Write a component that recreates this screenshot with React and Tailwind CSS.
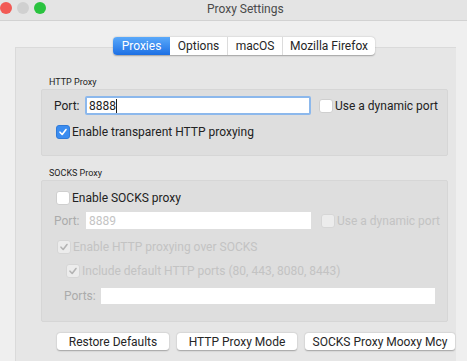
import React from 'react';

/**
 * Small mac-style checkbox
 */
function Check({ checked = false, disabled = false }) {
  const box = disabled
    ? 'bg-[#ececec] border border-[#d6d6d6]'
    : checked
      ? 'bg-[#3a8cf0] border border-[#2f7ad8]'
      : 'bg-white border border-[#cfcfcf]';
  return (
    <span className={`w-[14px] h-[14px] rounded-[3px] flex items-center justify-center flex-shrink-0 ${box}`}>
      {checked && (
        <svg width="10" height="10" viewBox="0 0 10 10" fill="none">
          <path
            d="M2 5.2 L4.2 7.5 L8 2.5"
            stroke={disabled ? '#b4b4b4' : '#ffffff'}
            strokeWidth="1.6"
            strokeLinecap="round"
            strokeLinejoin="round"
          />
        </svg>
      )}
    </span>
  );
}

function Button({ children, width }) {
  return (
    <div
      className={`h-[17px] ${width} bg-white rounded-[3px] shadow-[0_0.5px_1.5px_rgba(0,0,0,0.3)] flex items-center justify-center text-[12px] text-[#262626] whitespace-nowrap`}
    >
      {children}
    </div>
  );
}

export default function App() {
  return (
    <div
      className="w-[467px] h-[361px] bg-[#efefef] overflow-hidden flex flex-col"
      style={{ fontFamily: 'Roboto, "Liberation Sans", sans-serif' }}
    >
      {/* Title bar */}
      <div className="h-[21px] flex-shrink-0 bg-[#e4e4e4] border-b border-[#d2d2d2] flex items-center">
        <div className="flex gap-[5px] mt-[-5px]">
          <span className="w-[12px] h-[12px] rounded-full bg-[#f25a55]" />
          <span className="w-[12px] h-[12px] rounded-full bg-[#d0d0d0]" />
          <span className="w-[12px] h-[12px] rounded-full bg-[#2ac33f]" />
        </div>
        <div className="ml-[161px] mt-[-3px] text-[12px] text-[#4a4a4a]">Proxy Settings</div>
      </div>

      {/* Tabs */}
      <div className="mt-[16px] ml-[113px] flex h-[18px] relative z-10 -mb-[8px] w-fit rounded-[4px] bg-white shadow-[0_0.5px_1.5px_rgba(0,0,0,0.3)] text-[12px] text-[#262626]">
        <div className="w-[57px] flex items-center justify-center rounded-l-[4px] bg-gradient-to-b from-[#5aa9fa] to-[#1c6fe4] text-white">
          Proxies
        </div>
        <div className="w-[58px] flex items-center justify-center border-r border-[#dcdcdc]">Options</div>
        <div className="w-[55px] flex items-center justify-center border-r border-[#dcdcdc]">macOS</div>
        <div className="w-[92px] flex items-center justify-center">Mozilla Firefox</div>
      </div>

      {/* Tab content box */}
      <div className="ml-[15px] w-[441px] flex-1 bg-[#e6e6e6] border-t border-l border-[#dadada] pt-[28px] pl-[25px] text-[12px]">
        <div className="text-[9px] h-[12px] leading-[12px] ml-[8px] text-[#222]">HTTP Proxy</div>
        <div className="mt-[1px] w-[407px] h-[67px] bg-[#dedede] border border-[#d6d6d6] rounded-[2px] pl-[12px] pt-[6px]">
          <div className="flex items-center h-[19px] text-[#222] whitespace-nowrap">
            <span className="w-[31px]">Port:</span>
            <div className="w-[226px] h-[19px] bg-white border-2 border-[#8cb8ec] rounded-[2px] flex items-center pl-[2px]">
              8888<span className="w-px h-[14px] bg-[#222]" />
            </div>
            <span className="ml-[8px]"><Check /></span>
            <span className="ml-[2px]">Use a dynamic port</span>
          </div>
          <div className="flex items-center gap-[2px] mt-[8px] ml-[2px] text-[#222]">
            <Check checked />
            <span>Enable transparent HTTP proxying</span>
          </div>
        </div>

        <div className="text-[9px] h-[12px] leading-[12px] ml-[8px] mt-[11px] text-[#222]">SOCKS Proxy</div>
        <div className="mt-[1px] w-[407px] h-[142px] bg-[#dedede] border border-[#d6d6d6] rounded-[2px] pl-[12px] pt-[8px] whitespace-nowrap">
          <div className="flex items-center gap-[2px] ml-[2px] text-[#222]">
            <Check />
            <span>Enable SOCKS proxy</span>
          </div>
          <div className="flex items-center h-[17px] mt-[5px] text-[#ababab]">
            <span className="w-[32px]">Port:</span>
            <div className="w-[225px] h-[17px] bg-white flex items-center pl-[3px] text-[#c4c4c4]">8889</div>
            <span className="ml-[10px]"><Check disabled /></span>
            <span className="ml-[2px] text-[#c3c3c3]">Use a dynamic port</span>
          </div>
          <div className="flex items-center gap-[2px] mt-[9px] ml-[3px] text-[#c3c3c3]">
            <Check checked disabled />
            <span>Enable HTTP proxying over SOCKS</span>
          </div>
          <div className="flex items-center gap-[2px] mt-[6px] ml-[12px] text-[#c3c3c3]">
            <Check checked disabled />
            <span>Include default HTTP ports (80, 443, 8080, 8443)</span>
          </div>
          <div className="flex items-center h-[16px] mt-[8px] ml-[10px] text-[#ababab]">
            <span className="w-[37px]">Ports:</span>
            <div className="w-[334px] h-[16px] bg-white" />
          </div>
        </div>

        <div className="flex mt-[11px] ml-[16px] gap-[8px]">
          <Button width="w-[112px]">Restore Defaults</Button>
          <Button width="w-[120px]">HTTP Proxy Mode</Button>
          <Button width="w-[150px]">SOCKS Proxy Mooxy Mcy</Button>
        </div>
      </div>
    </div>
  );
}
